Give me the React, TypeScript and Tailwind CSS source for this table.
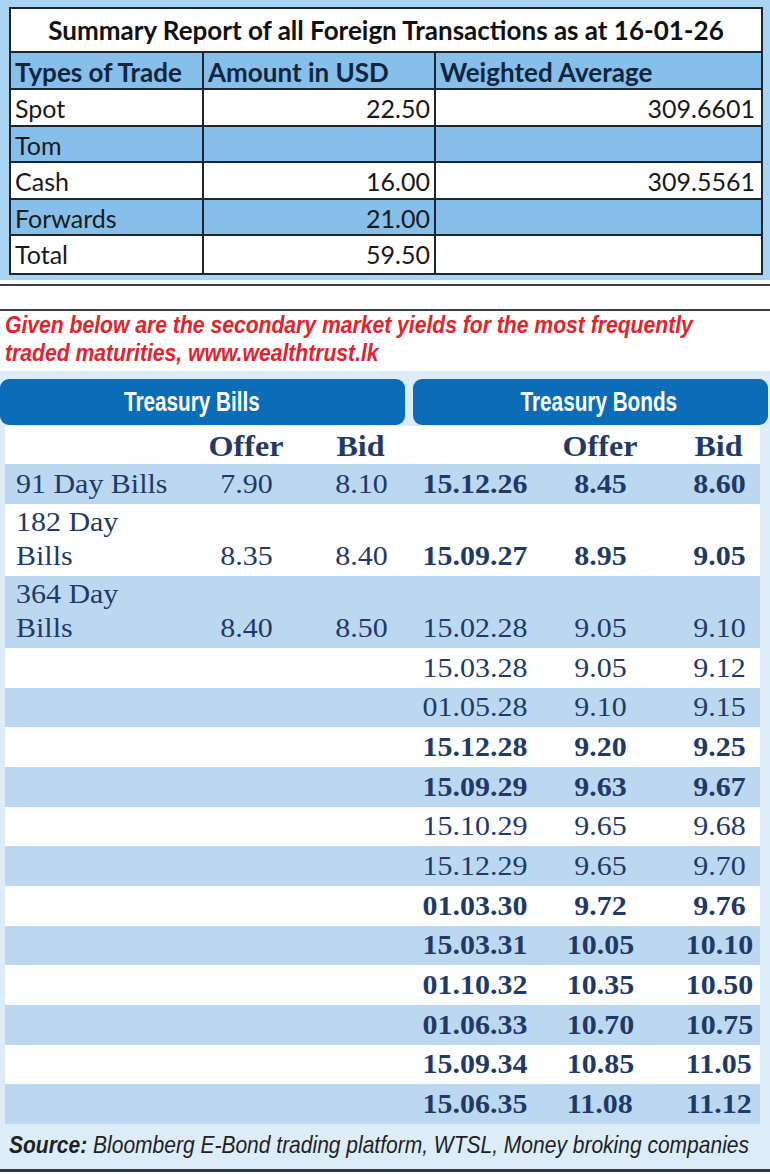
const top = [
  { type: 'Spot', amount: '22.50', avg: '309.6601', blue: false },
  { type: 'Tom', amount: '', avg: '', blue: true },
  { type: 'Cash', amount: '16.00', avg: '309.5561', blue: false },
  { type: 'Forwards', amount: '21.00', avg: '', blue: true },
  { type: 'Total', amount: '59.50', avg: '', blue: false },
];

type Row = {
  label?: string[];
  billOffer?: string;
  billBid?: string;
  date: string;
  offer: string;
  bid: string;
  bold: boolean;
};

const rows: Row[] = [
  { label: ['91 Day Bills'], billOffer: '7.90', billBid: '8.10', date: '15.12.26', offer: '8.45', bid: '8.60', bold: true },
  { label: ['182 Day', 'Bills'], billOffer: '8.35', billBid: '8.40', date: '15.09.27', offer: '8.95', bid: '9.05', bold: true },
  { label: ['364 Day', 'Bills'], billOffer: '8.40', billBid: '8.50', date: '15.02.28', offer: '9.05', bid: '9.10', bold: false },
  { date: '15.03.28', offer: '9.05', bid: '9.12', bold: false },
  { date: '01.05.28', offer: '9.10', bid: '9.15', bold: false },
  { date: '15.12.28', offer: '9.20', bid: '9.25', bold: true },
  { date: '15.09.29', offer: '9.63', bid: '9.67', bold: true },
  { date: '15.10.29', offer: '9.65', bid: '9.68', bold: false },
  { date: '15.12.29', offer: '9.65', bid: '9.70', bold: false },
  { date: '01.03.30', offer: '9.72', bid: '9.76', bold: true },
  { date: '15.03.31', offer: '10.05', bid: '10.10', bold: true },
  { date: '01.10.32', offer: '10.35', bid: '10.50', bold: true },
  { date: '01.06.33', offer: '10.70', bid: '10.75', bold: true },
  { date: '15.09.34', offer: '10.85', bid: '11.05', bold: true },
  { date: '15.06.35', offer: '11.08', bid: '11.12', bold: true },
];

const grid = 'grid grid-cols-[185px_112px_118px_110px_140px_90px] items-end';

function Num({ children, bold }: { children: React.ReactNode; bold?: boolean }) {
  return (
    <div className={`text-center leading-[34px] ${bold ? 'font-bold' : ''}`}>
      <span className="inline-block scale-x-[1.07]">{children}</span>
    </div>
  );
}

export default function App() {
  return (
    <div className="w-[770px] h-[1174px] overflow-hidden bg-white">
      {/* Foreign transactions summary */}
      <div className="bg-[#a8d3f3] pl-[9px] pt-[7px] pb-[5px]">
        <div className="w-[754px] border-2 border-[#1c2530] bg-white font-['Lato',sans-serif] text-[25px]">
          <div className="h-[44px] flex items-center justify-center border-b-2 border-[#1c2530] font-bold text-[26px] text-[#111]">
            Summary Report of all Foreign Transactions as at 16-01-26
          </div>
          <div className="grid grid-cols-[193px_232px_1fr] h-[37px] border-b-2 border-[#1c2530] bg-[#86bfea] font-bold text-[26px] text-[#0f263d]">
            <div className="border-r-2 border-[#1c2530] pl-[4px] flex items-center">Types of Trade</div>
            <div className="border-r-2 border-[#1c2530] pl-[4px] flex items-center">Amount in USD</div>
            <div className="pl-[4px] flex items-center">Weighted Average</div>
          </div>
          {top.map((r, i) => (
            <div
              key={r.type}
              className={`grid grid-cols-[193px_232px_1fr] text-[#1a1a1a] ${i < top.length - 1 ? 'h-[36.5px] border-b-2 border-[#1c2530]' : 'h-[37px]'} ${r.blue ? 'bg-[#86bfea]' : 'bg-white'}`}
            >
              <div className="border-r-2 border-[#1c2530] pl-[4px] flex items-center">{r.type}</div>
              <div className="border-r-2 border-[#1c2530] pr-[4px] flex items-center justify-end">{r.amount}</div>
              <div className="pr-[6px] flex items-center justify-end">{r.avg}</div>
            </div>
          ))}
        </div>
      </div>

      <div className="h-[4px]" />
      <div className="h-[2px] bg-[#3a4047]" />
      <div className="h-[23px]" />
      <div className="h-[2px] bg-[#3a4047]" />

      {/* Intro text */}
      <div className="h-[60px] pl-[5px] font-['Liberation_Sans',sans-serif] font-bold italic text-[24px] leading-[28px] text-[#e3222b] whitespace-nowrap">
        <div className="origin-left scale-x-[0.88]">Given below are the secondary market yields for the most frequently</div>
        <div className="origin-left scale-x-[0.88]">traded maturities, www.wealthtrust.lk</div>
      </div>

      {/* Yields panel */}
      <div className="h-[801px] bg-[#dcedf9] pt-[8px] border-b-[3px] border-[#2f3a44] flex flex-col">
        <div className="flex gap-[8px] font-['Liberation_Sans',sans-serif] font-bold text-[28px] text-white">
          <div className="w-[405px] h-[46px] rounded-[9px] bg-[#0b6cb7] flex items-center justify-center pr-[22px]">
            <span className="inline-block scale-x-[0.74]">Treasury Bills</span>
          </div>
          <div className="w-[355px] h-[46px] rounded-[9px] bg-[#0b6cb7] flex items-center justify-center pl-[16px]">
            <span className="inline-block scale-x-[0.74]">Treasury Bonds</span>
          </div>
        </div>

        <div className="ml-[5px] w-[755px] mt-[1px] font-['Liberation_Serif',serif] text-[28px] text-[#1f3a68]">
          <div className={`${grid} h-[38px] bg-white pb-[1px] font-bold text-[30px]`}>
            <div />
            <Num bold>Offer</Num>
            <Num bold>Bid</Num>
            <div />
            <Num bold>Offer</Num>
            <div className="pl-[8px]">
              <Num bold>Bid</Num>
            </div>
          </div>
          {rows.map((r, i) => (
            <div
              key={r.date}
              className={`${grid} pb-[3px] ${i % 2 === 0 ? 'bg-[#bcd8f0]' : 'bg-white'} ${
                r.label ? (r.label.length > 1 ? 'h-[72px]' : 'h-[40px]') : 'h-[39.67px]'
              }`}
            >
              <div className="pl-[11px] leading-[34px]">
                {r.label?.map((l) => (
                  <div key={l} className="origin-left scale-x-[1.07] whitespace-nowrap">
                    {l}
                  </div>
                ))}
              </div>
              <Num>{r.billOffer}</Num>
              <Num>{r.billBid}</Num>
              <Num bold={r.bold}>{r.date}</Num>
              <Num bold={r.bold}>{r.offer}</Num>
              <div className="pl-[8px]">
                <Num bold={r.bold}>{r.bid}</Num>
              </div>
            </div>
          ))}
        </div>

        <div className="flex-1 flex items-center pl-[9px] pb-[2px] font-['Liberation_Sans',sans-serif] italic text-[24px] text-[#231f20] whitespace-nowrap">
          <div className="origin-left scale-x-[0.875]">
            <span className="font-bold">Source:</span> Bloomberg E-Bond trading platform, WTSL, Money broking companies
          </div>
        </div>
      </div>
    </div>
  );
}
